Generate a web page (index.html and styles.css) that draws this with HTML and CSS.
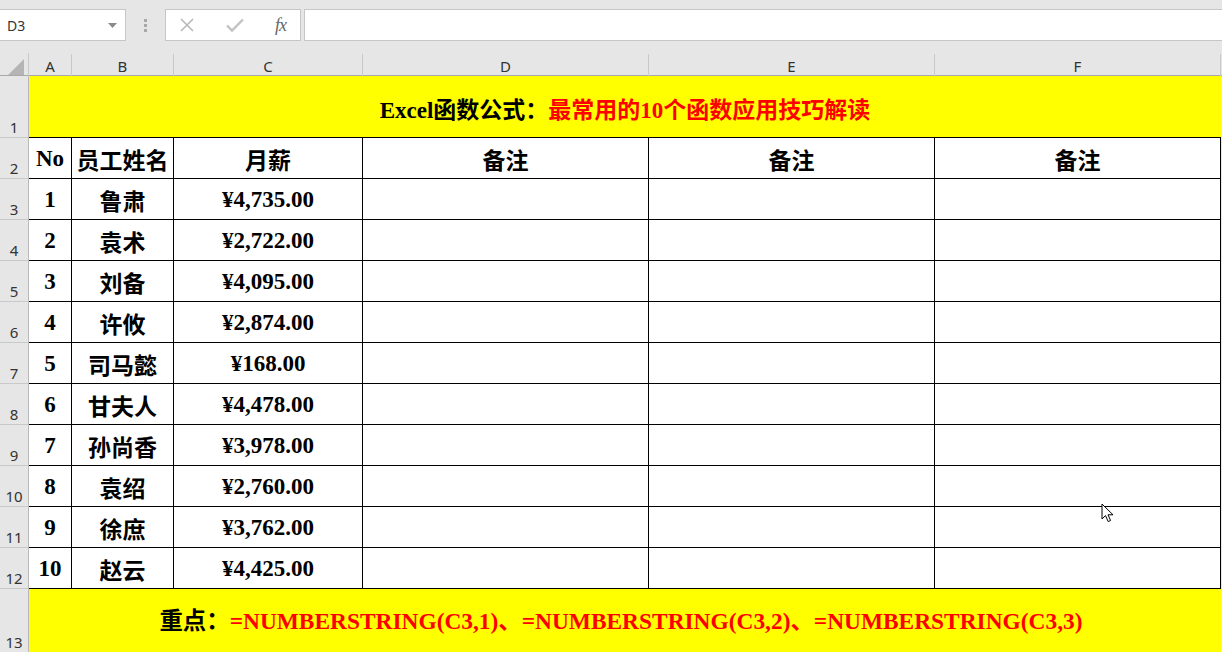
FILE: index.html
```html
<!DOCTYPE html>
<html>
<head>
<meta charset="utf-8">
<link rel="stylesheet" href="styles.css">
</head>
<body>
<div class="app">
  <div class="toolbar">
    <div class="namebox">
      <span class="name">D3</span>
      <svg class="caret" width="9" height="5" viewBox="0 0 9 5"><path d="M0 0h9L4.5 5z" fill="#8a8a8a"/></svg>
    </div>
    <div class="dots"><i></i><i></i><i></i></div>
    <div class="fxbox">
      <svg class="ic" width="16" height="16" viewBox="0 0 16 16"><path d="M2 2L14 14M14 2L2 14" stroke="#b8b8b8" stroke-width="1.6" fill="none"/></svg>
      <svg class="ic" width="20" height="16" viewBox="0 0 20 16"><path d="M2 8.5L7 13.5L18 2.5" stroke="#c2c2c2" stroke-width="2.4" fill="none"/></svg>
      <span class="fx">fx</span>
    </div>
    <div class="formula"></div>
  </div>

  <div class="sheet">
    <div class="row colhead">
      <div class="corner"><svg width="16" height="16" viewBox="0 0 16 16"><path d="M16 0V16H0z" fill="#b5b5b5"/></svg></div>
      <div class="ch">A</div><div class="ch">B</div><div class="ch">C</div><div class="ch">D</div><div class="ch">E</div><div class="ch">F</div><div class="ch rest"></div>
    </div>

    <div class="row r-title">
      <div class="rh">1</div>
      <div class="merged yellow title"><span class="blk">Excel函数公式：</span><span class="red">最常用的10个函数应用技巧解读</span></div>
      <div class="gap"></div>
    </div>

    <div class="row r-data head">
      <div class="rh">2</div>
      <div class="c">No</div><div class="c">员工姓名</div><div class="c">月薪</div><div class="c">备注</div><div class="c">备注</div><div class="c">备注</div><div class="gap"></div>
    </div>
    <div class="row r-data"><div class="rh">3</div><div class="c">1</div><div class="c">鲁肃</div><div class="c">¥4,735.00</div><div class="c"></div><div class="c"></div><div class="c"></div><div class="gap"></div></div>
    <div class="row r-data"><div class="rh">4</div><div class="c">2</div><div class="c">袁术</div><div class="c">¥2,722.00</div><div class="c"></div><div class="c"></div><div class="c"></div><div class="gap"></div></div>
    <div class="row r-data"><div class="rh">5</div><div class="c">3</div><div class="c">刘备</div><div class="c">¥4,095.00</div><div class="c"></div><div class="c"></div><div class="c"></div><div class="gap"></div></div>
    <div class="row r-data"><div class="rh">6</div><div class="c">4</div><div class="c">许攸</div><div class="c">¥2,874.00</div><div class="c"></div><div class="c"></div><div class="c"></div><div class="gap"></div></div>
    <div class="row r-data"><div class="rh">7</div><div class="c">5</div><div class="c">司马懿</div><div class="c">¥168.00</div><div class="c"></div><div class="c"></div><div class="c"></div><div class="gap"></div></div>
    <div class="row r-data"><div class="rh">8</div><div class="c">6</div><div class="c">甘夫人</div><div class="c">¥4,478.00</div><div class="c"></div><div class="c"></div><div class="c"></div><div class="gap"></div></div>
    <div class="row r-data"><div class="rh">9</div><div class="c">7</div><div class="c">孙尚香</div><div class="c">¥3,978.00</div><div class="c"></div><div class="c"></div><div class="c"></div><div class="gap"></div></div>
    <div class="row r-data"><div class="rh">10</div><div class="c">8</div><div class="c">袁绍</div><div class="c">¥2,760.00</div><div class="c"></div><div class="c"></div><div class="c"></div><div class="gap"></div></div>
    <div class="row r-data"><div class="rh">11</div><div class="c">9</div><div class="c">徐庶</div><div class="c">¥3,762.00</div><div class="c"></div><div class="c"></div><div class="c"></div><div class="gap"></div></div>
    <div class="row r-data"><div class="rh">12</div><div class="c">10</div><div class="c">赵云</div><div class="c">¥4,425.00</div><div class="c"></div><div class="c"></div><div class="c"></div><div class="gap"></div></div>

    <div class="row r-foot">
      <div class="rh">13</div>
      <div class="merged yellow foot"><span class="blk">重点：</span><span class="red">=NUMBERSTRING(C3,1)、=NUMBERSTRING(C3,2)、=NUMBERSTRING(C3,3)</span></div>
      <div class="gap"></div>
    </div>
  </div>

  <svg class="cursor" width="13" height="20" viewBox="0 0 13 20"><path d="M1 1V16L4.5 12.6L7.2 18.6L9.6 17.5L7 11.8H12z" fill="#fff" stroke="#000" stroke-width="1" stroke-linejoin="round"/></svg>
</div>
</body>
</html>
```

FILE: styles.css
```css
html, body {
  margin: 0;
  padding: 0;
  background: #e6e6e6;
  overflow: hidden;
}
.app {
  position: relative;
  width: 1222px;
  height: 652px;
  overflow: hidden;
  font-family: "Noto Sans", "Liberation Sans", sans-serif;
}
.toolbar {
  height: 53px;
  box-sizing: border-box;
  padding-top: 9px;
  display: flex;
  align-items: flex-start;
  background: #e6e6e6;
}
.namebox {
  width: 126px;
  height: 32px;
  box-sizing: border-box;
  background: #fff;
  border: 1px solid #c6c6c6;
  border-left: none;
  display: flex;
  align-items: center;
  justify-content: space-between;
  padding: 0 8px 0 7px;
}
.name {
  font-size: 14px;
  color: #333;
}
.dots {
  width: 39px;
  height: 32px;
  display: flex;
  flex-direction: column;
  align-items: center;
  justify-content: center;
  gap: 2px;
}
.dots i {
  display: block;
  width: 3px;
  height: 3px;
  background: #a8a8a8;
}
.fxbox {
  width: 136px;
  height: 32px;
  box-sizing: border-box;
  background: #fff;
  border: 1px solid #c6c6c6;
  display: flex;
  align-items: center;
  justify-content: space-between;
  padding: 0 14px 0 13px;
}
.fx {
  font-family: "Liberation Serif", serif;
  font-style: italic;
  font-size: 18px;
  color: #666;
  letter-spacing: -1px;
}
.formula {
  margin-left: 3px;
  flex: 1;
  height: 32px;
  box-sizing: border-box;
  background: #fff;
  border: 1px solid #c6c6c6;
  border-right: none;
}

.sheet {
  display: flex;
  flex-direction: column;
}
.row {
  display: grid;
  grid-template-columns: 29px 43px 102px 189px 286px 286px 286px 1px;
}
.colhead {
  height: 23px;
  box-sizing: border-box;
  border-bottom: 1px solid #a8a8a8;
  background: #e6e6e6;
}
.corner {
  display: flex;
  align-items: flex-end;
  justify-content: flex-end;
  padding: 0 4px 3px 0;
  border-right: 1px solid #c9c9c9;
}
.ch {
  box-sizing: border-box;
  border-right: 1px solid #c9c9c9;
  font-size: 15px;
  color: #333;
  text-align: center;
  line-height: 24px;
  margin-top: 1px;
}
.ch.rest { border-right: none; }

.rh {
  box-sizing: border-box;
  background: #e6e6e6;
  border-right: 1px solid #b8b8b8;
  border-bottom: 1px solid #c9c9c9;
  font-size: 15px;
  color: #333;
  display: flex;
  align-items: flex-end;
  justify-content: center;
  line-height: 19px;
}
.r-title { height: 62px; }
.r-data { height: 41px; }
.r-foot { height: 64px; }

.merged {
  grid-column: 2 / 8;
  box-sizing: border-box;
  display: flex;
  align-items: center;
  justify-content: center;
  font-family: "Liberation Serif", "Noto Sans CJK SC", serif;
  font-weight: 700;
  font-size: 23px;
  white-space: nowrap;
}
.yellow { background: #ffff00; }
.title {
  border-bottom: 1px solid #000;
  padding-top: 2px;
}
.foot {
  font-size: 23.4px;
  padding-bottom: 4px;
  padding-right: 8px;
}
.blk { color: #000; }
.red { color: #ff0000; }
.gap {
  background: #e6e6e6;
}

.c {
  box-sizing: border-box;
  background: #fff;
  border-right: 1px solid #000;
  border-bottom: 1px solid #000;
  display: flex;
  align-items: center;
  justify-content: center;
  font-family: "Liberation Serif", "Noto Sans CJK SC", serif;
  font-weight: 700;
  font-size: 23px;
  color: #000;
  white-space: nowrap;
  padding-top: 1px;
}

.cursor {
  position: absolute;
  left: 1101px;
  top: 503px;
}
```
